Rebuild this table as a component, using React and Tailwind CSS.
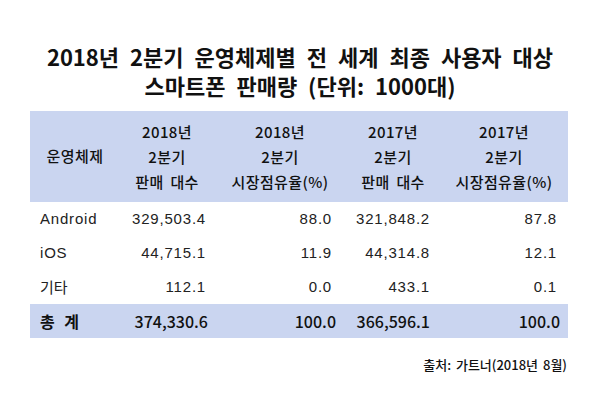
import React from "react";

const rows = [
  { os: "Android", a: "329,503.4", b: "88.0", c: "321,848.2", d: "87.8" },
  { os: "iOS", a: "44,715.1", b: "11.9", c: "44,314.8", d: "12.1" },
  { os: "기타", a: "112.1", b: "0.0", c: "433.1", d: "0.1" },
];

const headers = [
  ["2018년", "2분기", "판매 대수"],
  ["2018년", "2분기", "시장점유율(%)"],
  ["2017년", "2분기", "판매 대수"],
  ["2017년", "2분기", "시장점유율(%)"],
];

const kr = "font-['Noto_Sans_CJK_KR',sans-serif]";
const num = "font-['Liberation_Sans','Noto_Sans_CJK_KR',sans-serif] tracking-[0.8px]";
const grid = "grid grid-cols-[90px_94px_132px_94px_128px]";

const App = () => {
  return (
    <div className={`w-[600px] h-[400px] bg-white text-[#111] ${kr}`}>
      {/* Title */}
      <div className="pt-[42px] text-center font-bold text-[22px] leading-[29px] [word-spacing:6px]">
        <p>2018년 2분기 운영체제별 전 세계 최종 사용자 대상</p>
        <p>스마트폰 판매량 (단위: 1000대)</p>
      </div>

      {/* Table */}
      <div className="w-[538px] ml-[30px] mt-[11px]">
        <div className={`${grid} h-[91px] bg-[#cad5f0] items-center text-[15px] font-medium tracking-[0.4px]`}>
          <div className="text-center">운영체제</div>
          {headers.map((h, i) => (
            <div key={i} className="flex flex-col items-center leading-[25px] [word-spacing:3px]">
              {h.map((line, j) => (
                <span key={j}>{line}</span>
              ))}
            </div>
          ))}
        </div>

        {rows.map((r) => (
          <div key={r.os} className={`${grid} h-[34px] items-center text-[15px] text-[#222]`}>
            <div className={`pl-[10px] ${r.os === "기타" ? kr : num}`}>{r.os}</div>
            <div className={`text-right pr-[8px] ${num}`}>{r.a}</div>
            <div className={`text-right pr-[14px] ${num}`}>{r.b}</div>
            <div className={`text-right pr-[10px] ${num}`}>{r.c}</div>
            <div className={`text-right pr-[11px] ${num}`}>{r.d}</div>
          </div>
        ))}

        <div className={`${grid} h-[34px] bg-[#cad5f0] items-center text-[16px] font-medium`}>
          <div className="pl-[10px] font-bold [word-spacing:6px]">총 계</div>
          <div className="text-right pr-[6px]">374,330.6</div>
          <div className="text-right pr-[10px]">100.0</div>
          <div className="text-right pr-[10px]">366,596.1</div>
          <div className="text-right pr-[8px]">100.0</div>
        </div>
      </div>

      {/* Source */}
      <div className="w-[538px] ml-[30px] mt-[17px] text-right text-[13px] font-medium pr-[1px] [word-spacing:2px]">
        출처: 가트너(2018년 8월)
      </div>
    </div>
  );
};

export default App;
